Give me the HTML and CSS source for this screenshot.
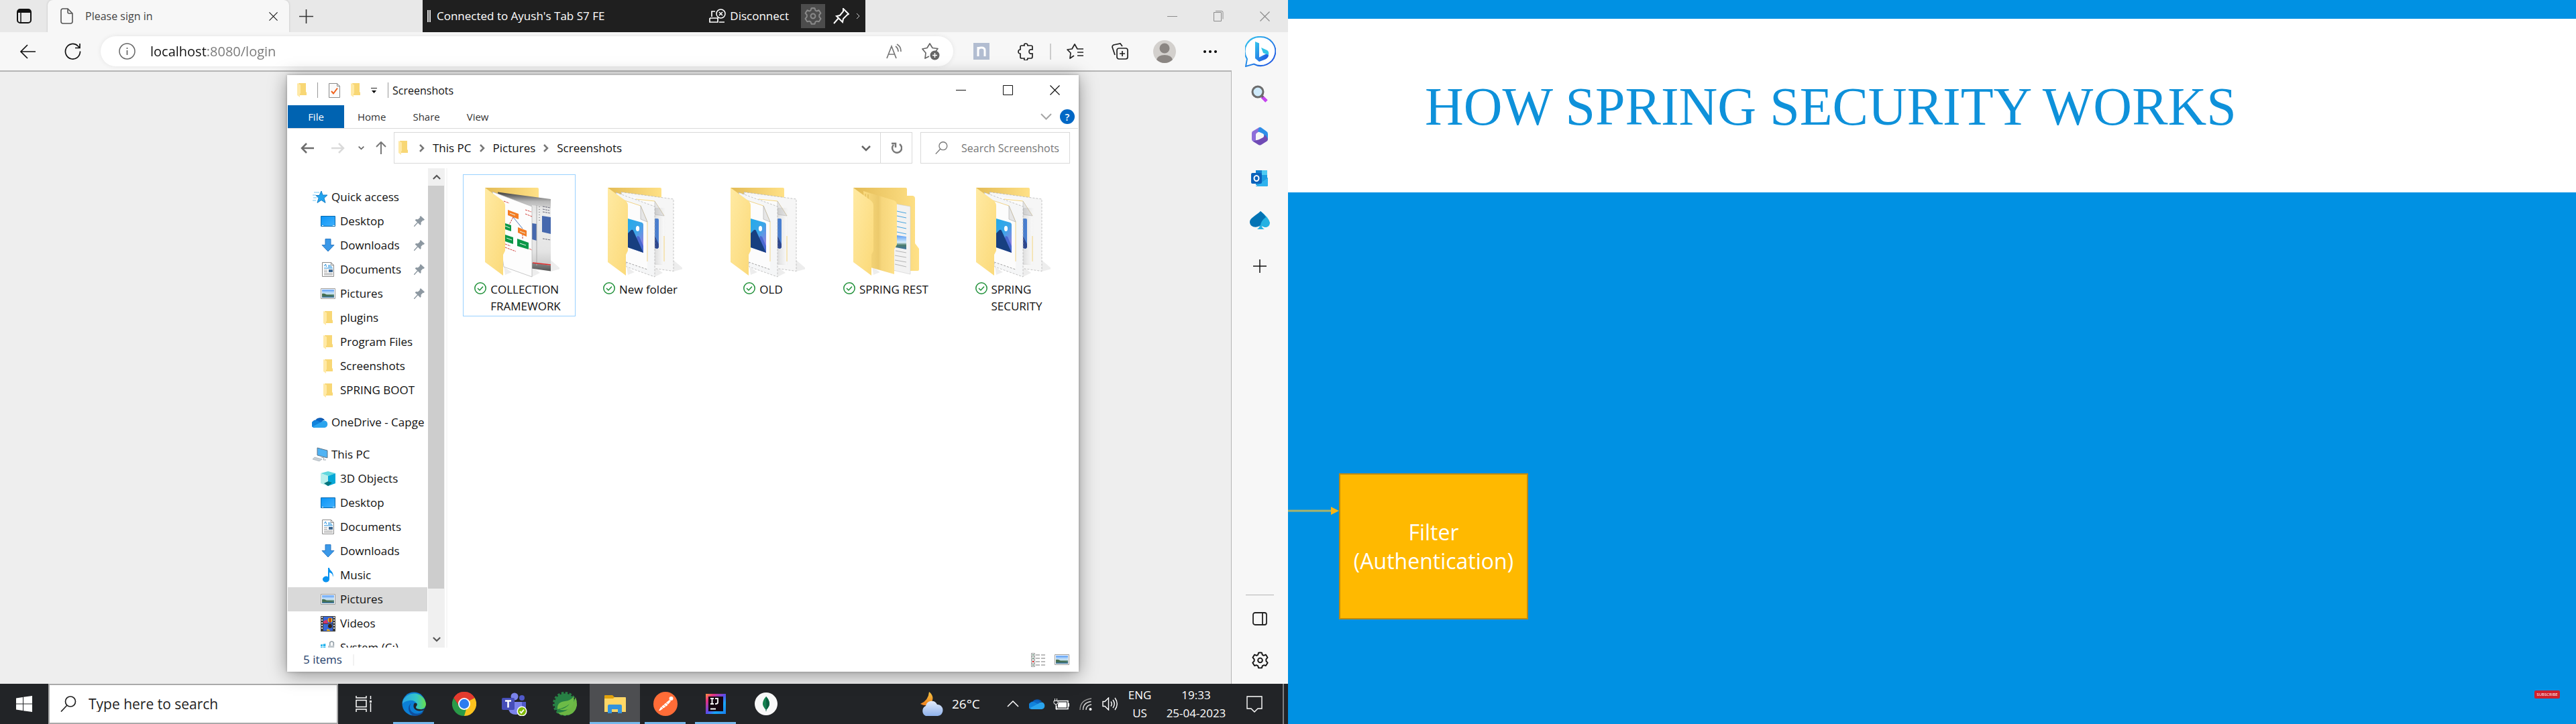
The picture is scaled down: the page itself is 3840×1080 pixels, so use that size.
FILE: index.html
```html
<!DOCTYPE html>
<html lang="en">
<head>
<meta charset="utf-8">
<meta name="viewport" content="width=device-width, initial-scale=1">
<title>Please sign in</title>
<link rel="stylesheet" href="styles.css">
</head>
<body>
<svg class="sprite" aria-hidden="true">
  <defs>
    <linearGradient id="gBack" x1="0" x2="1"><stop offset="0" stop-color="#e3bb55"/><stop offset="1" stop-color="#ffe187"/></linearGradient>
    <linearGradient id="gFlap" x1="0" x2="1" y1="0" y2="1"><stop offset="0" stop-color="#ffeaa3"/><stop offset="1" stop-color="#fbd978"/></linearGradient>
    <linearGradient id="gMid" x1="0" x2="1"><stop offset="0" stop-color="#fbdc80"/><stop offset=".45" stop-color="#ecca6c"/><stop offset=".55" stop-color="#f6d67c"/><stop offset="1" stop-color="#ffe28b"/></linearGradient>
    <linearGradient id="gSky" x1="0" y1="0" x2=".7" y2="1"><stop offset="0" stop-color="#22a9ea"/><stop offset=".5" stop-color="#3ba6e8"/><stop offset="1" stop-color="#9a7fe0"/></linearGradient>
    <linearGradient id="gDark" x1="0" y1="0" x2="0" y2="1"><stop offset="0" stop-color="#3c3c3c"/><stop offset=".12" stop-color="#b9b9b9"/><stop offset=".3" stop-color="#f0f0f0"/><stop offset=".75" stop-color="#d0d0d0"/><stop offset="1" stop-color="#555"/></linearGradient>
    <linearGradient id="gShade" x1="0" x2="1"><stop offset="0" stop-color="#777" stop-opacity=".5"/><stop offset="1" stop-color="#999" stop-opacity="0"/></linearGradient>
    <linearGradient id="gPic" x1="0" y1="0" x2="0" y2="1"><stop offset="0" stop-color="#5a9df5"/><stop offset=".5" stop-color="#d6ecfa"/><stop offset=".7" stop-color="#4b7d6b"/><stop offset="1" stop-color="#3d73a5"/></linearGradient>
    <linearGradient id="gEdgeA" x1="0" y1="0" x2="1" y2="0"><stop offset="0" stop-color="#2ba6e6"/><stop offset=".6" stop-color="#35c6c8"/><stop offset="1" stop-color="#68e04a"/></linearGradient>
    <linearGradient id="gBing" x1="0" y1="0" x2="1" y2="1"><stop offset="0" stop-color="#35c8ee"/><stop offset="1" stop-color="#1b4ae0"/></linearGradient>
    <linearGradient id="gDesk" x1="0" y1="0" x2="1" y2="1"><stop offset="0" stop-color="#0a95f7"/><stop offset="1" stop-color="#42b0fb"/></linearGradient>
    <linearGradient id="gIj" x1="0" y1="0" x2="1" y2="1"><stop offset="0" stop-color="#ff9a3d"/><stop offset=".2" stop-color="#e6317e"/><stop offset=".5" stop-color="#5a4bea"/><stop offset=".7" stop-color="#18a6f5"/><stop offset="1" stop-color="#1a7df0"/></linearGradient>
    <linearGradient id="gCloud" x1="0" y1="0" x2="0" y2="1"><stop offset="0" stop-color="#e4ecfb"/><stop offset="1" stop-color="#8fb2ec"/></linearGradient>
    <linearGradient id="gMoon" x1="0" y1="0" x2="0" y2="1"><stop offset="0" stop-color="#f6c544"/><stop offset="1" stop-color="#ee7f1c"/></linearGradient>
  </defs>
  <symbol id="folder" viewBox="0 0 14 21"><path d="M2 0h11v13l1 1v4H4z" fill="#f8d775"/><path d="M0 0l5 2.500v12.500l-1 1v5L0 18z" fill="#ffe9a6"/></symbol>
  <symbol id="picture" viewBox="0 0 22 16"><path d="M.5.500h21v15H.500z" fill="#fff" stroke="#9b9b9b"/><path d="M2 2h18v12H2z" fill="url(#gPic)"/><path d="M2 8q4-1 7 2 5 0 9 1v1H2z" fill="#466f53"/></symbol>
  <symbol id="desktop" viewBox="0 0 22 16"><path d="M.5.500h21v15H.500z" fill="url(#gDesk)" stroke="#0568ae"/><path d="M2 14.500h2m14 0h3" stroke="#fff"/></symbol>
  <symbol id="download" viewBox="0 0 22 22"><path d="M7 1.500h8v9h5l-9 9.500-9-9.500h5z" fill="#3a98e8" stroke="#2a79c4"/></symbol>
  <symbol id="document" viewBox="0 0 22 22"><path d="M2.500.500h13l4 4v17h-17z" fill="#fff" stroke="#8a8a8a"/><path d="M15.500.500v4h4" fill="none" stroke="#8a8a8a"/><path d="M5 6l2.500-3 1 4M11 5h4M11 7h6M5 9h13" stroke="#1f8bd8" fill="none"/><path d="M5 12h5m-5 2.500h5M5 17h13M5 19h13" stroke="#9b9b9b"/><path d="M12 11h6v4h-6z" fill="#3c668f"/></symbol>
  <symbol id="music" viewBox="0 0 22 22"><path d="M11 0h2c0 4 7 6 5.500 13H18c0-4-2-5-5-6v10a5 4.500 0 1 1-2-3.500z" fill="#0a93f0"/></symbol>
  <symbol id="video" viewBox="0 0 22 23"><path d="M0 0h22v23H0z" fill="#3d3d3d"/><path d="M4 1h14v10H4zM4 12h14v10H4z" fill="#3767d8"/><path d="M1 1h2v2H1zm0 4h2v2H1zm0 4h2v2H1zm0 4h2v2H1zm0 4h2v2H1zM19 1h2v2h-2zm0 4h2v2h-2zm0 4h2v2h-2zm0 4h2v2h-2zm0 4h2v2h-2z" fill="#ddd"/><circle cx="14" cy="6" r="3.500" fill="#e8a31b"/><path d="M4 8l5-3 2 6H4z" fill="#d1366b"/><path d="M13 3h2v7h-2z" fill="#a92513"/><circle cx="14" cy="15" r="3" fill="#32251a"/><path d="M10 19l4 2v1H9z" fill="#f0b624"/></symbol>
  <symbol id="cube" viewBox="0 0 22 22"><path d="M11 0l11 3-11 4L0 3z" fill="#62d7dd"/><path d="M0 3l11 4v15L0 18z" fill="#b9efec"/><path d="M22 3L11 7v15l11-4z" fill="#06a7d6"/><path d="M11 15l6 2-6 5-6-4z" fill="#04747d"/></symbol>
  <symbol id="pc" viewBox="0 0 24 22"><path d="M8 1l15 4v11L8 12z" fill="#4fb3f4" stroke="#5c7387"/><path d="M14 15l4 1-1 3h4" stroke="#9aa5ad" fill="none"/><path d="M4 15l11 3-4 3-10-3z" fill="#c9d1d7" stroke="#9aa5ad" stroke-width=".6"/></symbol>
  <symbol id="star" viewBox="0 0 24 20"><path d="M14 1l2 6 7 0-5 4.500 2 7-6-4-6 4 2-7-4-4h5z" fill="#22a4ee" stroke="#1780c9"/><path d="M3 3h8M1 7h5M2 11h5M1 15h5" stroke="#6ec3f3"/></symbol>
  <symbol id="cloud" viewBox="0 0 24 16"><path d="M5 6a7.500 6.500 0 0 1 14-1z" fill="#0a57b0"/><path d="M6 4.500a6.800 6 0 0 1 10.500 1L8 15H5A5 5 0 0 1 6 4.500z" fill="#0d66c2"/><path d="M3 6a6 6 0 0 1 7 .5L17 10l-8 6H5A5 5 0 0 1 3 6z" fill="#1183dc"/><path d="M18 5.500a5.300 5.300 0 0 1 1 10.500H5q-2 0-3.500-2L14 7.500q2-2 4-2z" fill="#2aa4ee"/></symbol>
  <symbol id="drive" viewBox="0 0 24 22"><path d="M0 6l3-.500v3.500H0zm4-.700l4-.600V9H4zM0 10h3v3H0zm4 0h4v4H4z" fill="#20b2ee"/><path d="M12 8h10v12H12z" fill="#bcc4ca"/><path d="M15 8V3q3-4 6 0v5" stroke="#9aa5ad" stroke-width="2" fill="none"/></symbol>
  <symbol id="pin" viewBox="0 0 16 16"><path d="M10 0l6 5.500-1.500 1.500-1-.300-3 3 .200 2.800L9.500 14 6 10.500 1 16H0v-1l5-5.500L1.700 6.500 3 5l3 .300L9 2.500l-.300-1z" fill="#8d98a1"/></symbol>
  <symbol id="synced" viewBox="0 0 18 18"><circle cx="9" cy="9" r="8.200" fill="#fff" stroke="#1f9038" stroke-width="1.500"/><path d="M5 9l3 3 5-5.500" fill="none" stroke="#1f9038" stroke-width="1.500"/></symbol>
  <symbol id="min" viewBox="0 0 15 15"><path d="M0 7.500h15" stroke="currentColor"/></symbol>
  <symbol id="max" viewBox="0 0 15 15"><path d="M.5.500h14v14H.500z" stroke="currentColor" fill="none"/></symbol>
  <symbol id="cross" viewBox="0 0 15 15"><path d="M.5.500l14 14m0-14l-14 14" stroke="currentColor" stroke-width="1.200"/></symbol>
  <symbol id="plus" viewBox="0 0 20 20"><path d="M10 0v20M0 10h20" stroke="currentColor" stroke-width="1.500"/></symbol>
  <symbol id="chev" viewBox="0 0 14 10"><path d="M1 2l6 6 6-6" stroke="currentColor" stroke-width="2.500" fill="none"/></symbol>
  <symbol id="lens" viewBox="0 0 24 24"><circle cx="15" cy="8.500" r="7.500" fill="none" stroke="currentColor" stroke-width="1.700"/><path d="M10 14L1 23.500" stroke="currentColor" stroke-width="1.700"/></symbol>
  <symbol id="gear" viewBox="0 0 24 24"><path d="M12 .900l2.300.300.900 3 1.900.900 2.900-1.200 2.600 4.100-2.100 2.400v2.600l2.200 2.500-2.600 4.200-3-.800-1.900 1.100-.900 2.900H9.700l-.900-2.900-1.900-1.100-3 .8-2.600-4.200 2.200-2.500v-2.600L1.400 8 4 3.900l2.900 1.200 1.900-.900.900-3z" fill="none" stroke="currentColor" stroke-width="1.800" stroke-linejoin="round"/><circle cx="12" cy="12" r="3.200" fill="none" stroke="currentColor" stroke-width="1.800"/></symbol>
  <symbol id="photoFolder" viewBox="-9 0 120 134">
    <path d="M0 0h78q2 0 2 2v70H20z" fill="url(#gBack)"/>
    <path d="M98 108l15 13-15 4zM70 118l12 9-12 6zM28 118l12 8-10 4z" fill="#000" opacity=".07"/>
    <path d="M20 6.500L98 17v107.500L30 115z" fill="#f6f6f6" stroke="#b5b5b5" stroke-dasharray="3 2" stroke-width=".8"/>
    <path d="M25 11l47 9 12 22v73l-30-6z" fill="#fbfbfb"/>
    <path d="M42 17l28 3 14 22M84 72v38" fill="none" stroke="#f6d67c"/><path d="M70 20l14 22-14-2z" fill="#e4e4e4" stroke="#bbb" stroke-width=".6"/>
    <path d="M70 46h4q2 0 2 2v41l-2 2-4-1z" fill="#3f7fe0"/><path d="M70 72l6 12v5l-2 2-4-1z" fill="#1d3c92"/>
    <path d="M70 30h16v85H70z" fill="url(#gShade)" opacity=".45"/>
    <path d="M12 7l58 21v105L28 118z" fill="#f5f6f7" stroke="#b5b5b5" stroke-dasharray="3 2" stroke-width=".8"/>
    <path d="M25 20l24 7 10 24v71l-32-10z" fill="#fcfcfc"/>
    <path d="M27 111l32 11" stroke="#888" stroke-width=".8" stroke-dasharray="3 2"/>
    <path d="M25 19l24 8 10 24v59" fill="none" stroke="#f1d58b"/><path d="M49 27l10 24-10-4z" fill="#e6e6e6" stroke="#aaa" stroke-width=".6"/>
    <path d="M30 46l21 6q2 1 2 3v42l-23-8z" fill="url(#gSky)"/><path d="M40 84l4-12 3 1 6 14v10z" fill="#4a69d2"/><path d="M30 68l5-5q2-1 3 1l15 33-23-8z" fill="#173f80"/><ellipse cx="44.500" cy="61" rx="2.600" ry="4" fill="#fff"/>
    <path d="M0 0l26 19q4 3 4 8v67l-3 6v31L0 111z" fill="url(#gFlap)"/>
  </symbol>
  <symbol id="chartFolder" viewBox="-9 0 120 134">
    <path d="M0 0h78q2 0 2 2v70H20z" fill="url(#gBack)"/>
    <path d="M98 108l15 13-15 4zM70 118l12 9-12 6zM28 118l12 8-10 4z" fill="#000" opacity=".07"/>
    <path d="M19 6.500L98 17v107.500L30 115z" fill="url(#gDark)"/>
    <path d="M70 26l28 4v86l-28-4z" fill="#ececec" opacity=".7"/>
    <path d="M85 42l13 2v25l-13-3zM70 53l7 1v25l-7-2z" fill="#4668ae"/><path d="M77 26v90" stroke="#aaa"/><path d="M81 28v24" stroke="#555" stroke-dasharray="1 3"/>
    <path d="M86 28l11 2m-11 2l10 2m-10 2l11 2M86 76l12 2" stroke="#667" stroke-dasharray="3 1" stroke-width="1"/>
    <path d="M71 112l27 3" stroke="#e22a2a" stroke-width="1.500"/>
    <path d="M11 6l59 22v105L28 118z" fill="#fdfdfd" stroke="#b0b0b0" stroke-width=".7"/>
    <path d="M42 44l-6 11M56 69v8" stroke="#c6413b" stroke-dasharray="3 1"/><path d="M42 44l14 17" stroke="#5077b5"/>
    <path d="M34 33l16 6v8l-16-6zM49 59l13 5v9l-13-6z" fill="#f37c24"/>
    <path d="M30 53l9 3v9l-9-3zM30 70l12 4v10l-12-4zM48 76l17 6v10l-17-5z" fill="#0b9747"/>
    <path d="M37 38l8 3M52 65l8 3M30 57l7 3M32 75l8 3M52 83l9 3" stroke="#e9f5e9"/>
    <path d="M28 20l8 3M60 33l9 3m-9 3l10 4M30 84l8 3m-8 2l16 6M66 91l4 2" stroke="#d2403a" stroke-dasharray="3 1"/>
    <path d="M0 0l26 19q4 3 4 8v67l-3 6v31L0 111z" fill="url(#gFlap)"/>
  </symbol>
  <symbol id="nestedFolder" viewBox="-9 0 120 134">
    <path d="M0 0h78q2 0 2 2v10h9q3 1 3 4v67l6 8v31q0 2-2 2H60L20 40z" fill="url(#gBack)"/>
    <path d="M28 118l12 8-10 4z" fill="#000" opacity=".07"/>
    <path d="M62 24l23 4v101l-26-6z" fill="#f2f2f2" stroke="#ccc" stroke-width=".6"/>
    <path d="M65 35l14 3m-14 4l14 3m-14 5l14 3m-14 5l14 3m-14 5l14 3" stroke="#48a4de" stroke-width="1"/><path d="M65 71l14 2v19l-16-3z" fill="url(#gPic)"/><path d="M63 94l16 3m-17 4l17 3m-17 4l17 3m-17 3l17 4" stroke="#b5b5b5"/>
    <path d="M15 5l46 14q4 2 4 7v59l-4 7v37L26 119z" fill="url(#gMid)"/>
    <path d="M18 9v10m4-9v12" stroke="#d9b452"/>
    <path d="M0 0l26 19q4 3 4 8v67l-3 6v31L0 111z" fill="url(#gFlap)"/>
  </symbol>
</svg>

<main class="screens">
  <section class="desktop" aria-label="Desktop">
    <div class="browser">
      <header class="tabstrip">
        <button class="ws" aria-label="Tab actions"><svg width="22" height="22" viewBox="0 0 22 22"><rect x="1" y="1" width="20" height="20" rx="4" fill="none" stroke="#111" stroke-width="2"/><path d="M1 6V4q0-3 3-3h14q3 0 3 3v2z" fill="#111"/><path d="M6 6v15" stroke="#111" stroke-width="1.500"/></svg></button>
        <div class="tab"><svg width="19" height="24" viewBox="0 0 19 24"><path d="M4 1h7l7 7v12q0 3-3 3H4q-3 0-3-3V4q0-3 3-3z" fill="none" stroke="#555" stroke-width="1.600"/><path d="M11 1v5q0 2 2 2h5" fill="none" stroke="#555" stroke-width="1.600"/></svg><span class="tab-title">Please sign in</span><button aria-label="Close tab"><svg width="13" height="13"><use href="#cross"/></svg></button></div>
        <button class="newtab" aria-label="New tab"><svg width="21" height="21"><use href="#plus"/></svg></button>
        <div class="winbtns dim"><button aria-label="Minimise"><svg width="15" height="15"><use href="#min"/></svg></button><button aria-label="Restore"><svg width="15" height="16" viewBox="0 0 15 16"><path d="M.5 2.500h11v13H.500zM3 .500h9q2 0 2 2v10" stroke="currentColor" fill="none"/></svg></button><button aria-label="Close"><svg width="15" height="15"><use href="#cross"/></svg></button></div>
      </header>
      <div class="toolbar">
        <button class="nav-btn" aria-label="Back"><svg width="25" height="22" viewBox="0 0 25 22"><path d="M12 1L2 11l10 10M2 11h22" fill="none" stroke="#111" stroke-width="1.700"/></svg></button>
        <button class="nav-btn" aria-label="Refresh"><svg width="25" height="25" viewBox="0 0 25 25"><path d="M23.500 12.500A11 11.300 0 1 1 20 4.500l3 3M23 1v6.500h-7" fill="none" stroke="#111" stroke-width="1.700"/></svg></button>
        <div class="omnibox">
          <svg width="25" height="25" viewBox="0 0 25 25"><circle cx="12.500" cy="12.500" r="11.500" fill="none" stroke="#666" stroke-width="1.500"/><path d="M12.500 11v7M12.500 7v2" stroke="#666" stroke-width="1.700"/></svg>
          <input class="url" aria-label="Address" value="localhost:8080/login">
          <button aria-label="Read aloud"><svg width="24" height="24" viewBox="0 0 24 24"><path d="M1 22L8 4l7 18M3.500 16h9M14 4q4 3 4 8M16 1q6 3 6 11" fill="none" stroke="#777" stroke-width="1.700"/></svg></button>
          <button aria-label="Add to favourites"><svg width="27" height="26" viewBox="0 0 27 26"><path d="M11 20l-6 3 1-8-5-6 7-1.500L12 1l4 6.500 8 1-3 4" fill="none" stroke="#666" stroke-width="1.700" stroke-linejoin="round"/><circle cx="19.500" cy="18.500" r="7" fill="#666"/><path d="M19.500 15v7M16 18.500h7" stroke="#fff" stroke-width="1.500"/></svg></button>
        </div>
        <div class="actions">
          <button aria-label="Notes extension"><svg width="24" height="25" viewBox="0 0 24 25"><path d="M0 0h24v25H0z" fill="#b2bdd1"/><path d="M7 20V6m0 5q0-4 5-4t5 4v9" fill="none" stroke="#fff" stroke-width="3"/></svg></button>
          <button aria-label="Extensions"><svg width="24" height="26" viewBox="0 0 24 26"><path d="M6 4h4q-1-3 2-3t3 3h5q2 0 2 2v4q-5-1-5 3t5 3v4q0 3-2 3h-5q0 3-3 3t-2-3H6q-2 0-2-2v-5q-3 0-3-3t3-3V6q0-2 2-2z" fill="none" stroke="#222" stroke-width="1.700"/></svg></button>
          <i class="divider"></i>
          <button aria-label="Favourites"><svg width="26" height="24" viewBox="0 0 26 24"><path d="M11 18l-6 4 1-8-5-5 7-1 4-7 4 7h9M16 13h9M16 18h9" fill="none" stroke="#222" stroke-width="1.700" stroke-linejoin="round"/></svg></button>
          <button aria-label="Collections"><svg width="25" height="25" viewBox="0 0 25 25"><path d="M5 18L1 6q0-2 2-3l10-2 3 4" fill="none" stroke="#222" stroke-width="1.700"/><rect x="8" y="8" width="16" height="16" rx="3" fill="none" stroke="#222" stroke-width="1.700"/><path d="M16 12v8M12 16h8" stroke="#222" stroke-width="1.700"/></svg></button>
          <button class="wide" aria-label="Profile"><svg width="34" height="34" viewBox="0 0 34 34"><circle cx="17" cy="17" r="17" fill="#d3d0cd"/><circle cx="17" cy="12" r="7.500" fill="#8b8683"/><path d="M5 29q2-7 12-7t12 7q-5 5-12 5T5 29z" fill="#8b8683"/></svg></button>
          <button class="wide" aria-label="Settings and more"><svg width="20" height="4" viewBox="0 0 20 4"><circle cx="2" cy="2" r="2"/><circle cx="10" cy="2" r="2"/><circle cx="18" cy="2" r="2"/></svg></button>
          <button class="bing" aria-label="Bing chat"><svg width="46" height="46" viewBox="0 0 46 46"><path d="M23 1a22 21.500 0 1 1-10 40.500L1 45l2-11A21.500 21.500 0 0 1 23 1z" fill="#fff" stroke="url(#gBing)" stroke-width="2"/><path d="M15 8l6 2.500v21L34 25l1 4q-1 4-6 6l-8 3-6-5z" fill="url(#gBing)"/><path d="M24 17l9 4q3 2 2 7l-8-3z" fill="#31c4e8"/></svg></button>
        </div>
      </div>
      <div class="viewport">
        <div class="page"></div>
        <aside class="side">
          <button aria-label="Search"><svg width="26" height="26" viewBox="0 0 26 26"><path d="M16 17l7 7" stroke="#c544f0" stroke-width="5"/><path d="M15 15l3 3" stroke="#666" stroke-width="3"/><circle cx="10" cy="10" r="8" fill="#cfeafa" stroke="#6c6c6c" stroke-width="3"/></svg></button>
          <button aria-label="Microsoft 365"><svg width="26" height="28" viewBox="0 0 26 28"><path d="M12 1L2 7Q1 8 1 10v9q0 2 2 3l4 2V12q0-2 2-3l7-4V3z" fill="#8d6fd9"/><path d="M12 1q2-1 4 1l7 5q2 1 2 4v9l-6-3v-5q0-1-2-2l-7-3z" fill="#2d8fe8"/><path d="M25 18q0 3-2 4l-8 5q-2 1-4 0l-8-5 5-2q2 0 4-1l6-3 3-4z" fill="#704bb5"/></svg></button>
          <button aria-label="Outlook"><svg width="26" height="26" viewBox="0 0 26 26"><path d="M7 1h17v22H7z" fill="#1b9de2"/><path d="M7 1h9v7H7z" fill="#1380cf"/><path d="M16 1h8v7h-8z" fill="#4ecbf3"/><path d="M25 12v11q0 2-2 2H7z" fill="#1266b5"/><path d="M7 25l18-13v11q0 2-2 2z" fill="#2fb2ee"/><rect y="5" width="16" height="16" rx="2" fill="#0b62bb"/><ellipse cx="8" cy="13" rx="3.500" ry="4" fill="none" stroke="#fff" stroke-width="2"/></svg></button>
          <button aria-label="Games"><svg width="30" height="28" viewBox="0 0 30 28"><path d="M16 0q12 9 14 17c0 7-7 9-12 5q0 3 4 5H11q3-2 4-5z" fill="#25b1e2"/><path d="M16 0q6 5 8 9-7 5-8 12C10 26 0 24 0 16 0 10 9 7 16 0z" fill="#0273b4"/></svg></button>
          <button class="add" aria-label="Customise"><svg width="20" height="20"><use href="#plus"/></svg></button>
          <div class="side-foot">
            <button aria-label="Hide sidebar"><svg width="22" height="20" viewBox="0 0 22 20"><rect x="1" y="1" width="20" height="18" rx="3" fill="none" stroke="#222" stroke-width="1.800"/><path d="M15 1v18" stroke="#222" stroke-width="1.800"/></svg></button>
            <button aria-label="Settings"><svg width="25" height="26"><use href="#gear"/></svg></button>
          </div>
        </aside>
      </div>
    </div>

    <div class="castbar">
      <i class="grip"></i><span class="cast-text">Connected to Ayush's Tab S7 FE</span>
      <button class="disconnect"><svg width="25" height="22" viewBox="0 0 25 22"><path d="M9 4H4v8M1 14v6h12v-6H1M15 20h8" fill="none" stroke="#fff" stroke-width="1.700"/><circle cx="17.500" cy="7.500" r="6.500" fill="none" stroke="#fff" stroke-width="1.500"/><path d="M15 5l5 5m0-5l-5 5" stroke="#fff" stroke-width="1.500"/></svg>Disconnect</button>
      <button class="castgear" aria-label="Settings"><svg width="26" height="26"><use href="#gear"/></svg></button>
      <button class="castpin" aria-label="Pin"><svg width="24" height="24" viewBox="0 0 24 24"><path d="M15 1l8 8-2 1-6 6-1 5-9-9 5-1 5-6zM8 15l-7 8" fill="none" stroke="#fff" stroke-width="2"/></svg></button>
      <button aria-label="Hide"><svg width="7" height="10" viewBox="0 0 7 10"><path d="M1 1l4 4-4 4" fill="none" stroke="#ccc"/></svg></button>
    </div>

    <section class="explorer" aria-label="Screenshots">
      <header class="ex-title">
        <svg width="14" height="21"><use href="#folder"/></svg><i class="sep"></i>
        <svg width="17" height="22" viewBox="0 0 17 22"><path d="M.5.500h12l4 4v17H.500z" fill="#fafafa" stroke="#8a8a8a"/><path d="M12.500.500v4h4" fill="none" stroke="#8a8a8a"/><path d="M4 12l3 3.500 6-8" fill="none" stroke="#f0611b" stroke-width="2"/></svg>
        <svg width="14" height="21"><use href="#folder"/></svg>
        <svg width="9" height="8" viewBox="0 0 9 8"><path d="M0 .500h9" stroke="#222"/><path d="M1 4h7L4.500 8z"/></svg><i class="sep"></i>
        <h2>Screenshots</h2>
        <div class="winbtns"><button aria-label="Minimise"><svg width="15" height="15"><use href="#min"/></svg></button><button aria-label="Maximise"><svg width="15" height="15"><use href="#max"/></svg></button><button aria-label="Close"><svg width="15" height="15"><use href="#cross"/></svg></button></div>
      </header>
      <nav class="ribbon"><button class="file">File</button><button>Home</button><button>Share</button><button>View</button>
        <div class="ribbon-end"><button aria-label="Expand ribbon"><svg width="17" height="10" viewBox="0 0 17 10"><path d="M1 1l7.500 7.500L16 1" fill="none" stroke="#a5a5a5" stroke-width="2"/></svg></button><button class="help" aria-label="Help">?</button></div>
      </nav>
      <div class="ex-nav">
        <button class="arrow" aria-label="Back"><svg width="20" height="16" viewBox="0 0 20 16"><path d="M9 1L2 8l7 7M2 8h18" fill="none" stroke="#6d6d6d" stroke-width="2.500"/></svg></button>
        <button class="arrow" aria-label="Forward"><svg width="20" height="16" viewBox="0 0 20 16"><path d="M11 1l7 7-7 7M18 8H0" fill="none" stroke="#dadada" stroke-width="2.500"/></svg></button>
        <button class="recent" aria-label="Recent"><svg width="9" height="7"><use href="#chev"/></svg></button>
        <button class="up" aria-label="Up"><svg width="16" height="19" viewBox="0 0 16 19"><path d="M1 8l7-7 7 7M8 1v18" fill="none" stroke="#777" stroke-width="2"/></svg></button>
        <div class="crumbs"><svg class="place" width="14" height="21"><use href="#folder"/></svg><svg class="gt" viewBox="0 0 8 12"><path d="M1 1l5 5-5 5" /></svg><a href="#pc">This PC</a><svg class="gt" viewBox="0 0 8 12"><path d="M1 1l5 5-5 5"/></svg><a href="#pictures">Pictures</a><svg class="gt" viewBox="0 0 8 12"><path d="M1 1l5 5-5 5"/></svg><a href="#screenshots">Screenshots</a>
          <button class="drop" aria-label="Previous locations"><svg width="14" height="10"><use href="#chev"/></svg></button><button class="reload" aria-label="Refresh"><svg width="17" height="17" viewBox="0 0 17 17"><path d="M4 4a7 7 0 1 0 9-1M1 2h6v6" fill="none" stroke="#777" stroke-width="2.500"/></svg></button></div>
        <label class="find"><svg width="19" height="19"><use href="#lens"/></svg><input type="text" aria-label="Search Screenshots" placeholder="Search Screenshots"></label>
      </div>
      <div class="ex-body">
        <nav class="tree">
          <a class="group" href="#q"><svg width="24" height="20"><use href="#star"/></svg>Quick access</a>
          <a href="#q1"><svg width="22" height="16"><use href="#desktop"/></svg>Desktop<svg class="pin"><use href="#pin"/></svg></a>
          <a href="#q2"><svg width="22" height="22"><use href="#download"/></svg>Downloads<svg class="pin"><use href="#pin"/></svg></a>
          <a href="#q3"><svg width="22" height="22"><use href="#document"/></svg>Documents<svg class="pin"><use href="#pin"/></svg></a>
          <a href="#q4"><svg width="22" height="16"><use href="#picture"/></svg>Pictures<svg class="pin"><use href="#pin"/></svg></a>
          <a href="#q5"><svg width="22" height="21"><use href="#folder"/></svg>plugins</a>
          <a href="#q6"><svg width="22" height="21"><use href="#folder"/></svg>Program Files</a>
          <a href="#q7"><svg width="22" height="21"><use href="#folder"/></svg>Screenshots</a>
          <a href="#q8"><svg width="22" height="21"><use href="#folder"/></svg>SPRING BOOT</a>
          <a class="group later" href="#o"><svg width="24" height="16"><use href="#cloud"/></svg>OneDrive - Capge</a>
          <a class="group later" href="#p"><svg width="24" height="22"><use href="#pc"/></svg>This PC</a>
          <a href="#p1"><svg width="22" height="22"><use href="#cube"/></svg>3D Objects</a>
          <a href="#p2"><svg width="22" height="16"><use href="#desktop"/></svg>Desktop</a>
          <a href="#p3"><svg width="22" height="22"><use href="#document"/></svg>Documents</a>
          <a href="#p4"><svg width="22" height="22"><use href="#download"/></svg>Downloads</a>
          <a href="#p5"><svg width="22" height="22"><use href="#music"/></svg>Music</a>
          <a class="current" href="#p6"><svg width="22" height="16"><use href="#picture"/></svg>Pictures</a>
          <a href="#p7"><svg width="22" height="23"><use href="#video"/></svg>Videos</a>
          <a href="#p8"><svg width="22" height="22"><use href="#drive"/></svg>System (C:)</a>
        </nav>
        <div class="scroll"><button class="flip" aria-label="Scroll up"><svg width="12" height="9"><use href="#chev"/></svg></button><i class="thumb"></i><i class="track"></i><button aria-label="Scroll down"><svg width="12" height="9"><use href="#chev"/></svg></button></div>
        <div class="files">
          <a class="tile focus" href="#f1"><svg width="120" height="134"><use href="#chartFolder"/></svg><span class="name"><svg width="18" height="18"><use href="#synced"/></svg><span>COLLECTION<br>FRAMEWORK</span></span></a>
          <a class="tile" href="#f2"><svg width="120" height="134"><use href="#photoFolder"/></svg><span class="name"><svg width="18" height="18"><use href="#synced"/></svg><span>New folder</span></span></a>
          <a class="tile" href="#f3"><svg width="120" height="134"><use href="#photoFolder"/></svg><span class="name"><svg width="18" height="18"><use href="#synced"/></svg><span>OLD</span></span></a>
          <a class="tile" href="#f4"><svg width="120" height="134"><use href="#nestedFolder"/></svg><span class="name"><svg width="18" height="18"><use href="#synced"/></svg><span>SPRING REST</span></span></a>
          <a class="tile" href="#f5"><svg width="120" height="134"><use href="#photoFolder"/></svg><span class="name"><svg width="18" height="18"><use href="#synced"/></svg><span>SPRING<br>SECURITY</span></span></a>
        </div>
      </div>
      <footer class="status"><span>5 items</span><i></i>
        <button aria-label="Details view"><svg width="22" height="21" viewBox="0 0 22 21"><path d="M.5.500h5v20h-5zM.500 5.500h5m-5 5h5m-5 5h5" fill="none" stroke="#9b9b9b"/><path d="M7 3h6m2 0h6M7 8h6m2 0h6M7 13h6m2 0h6M7 18h6m2 0h6" stroke="#777"/><path d="M2 3h2m-2 5h2m-2 10h2" stroke="#55806a" stroke-width="2"/><path d="M2 13h2" stroke="#c00" stroke-width="2"/></svg></button>
        <button aria-label="Large icons view"><svg width="22" height="16"><use href="#picture"/></svg></button></footer>
    </section>

    <footer class="taskbar">
      <button class="start" aria-label="Start"><svg width="24" height="24" viewBox="0 0 24 24"><path d="M0 3.500L10 2v9.500H0zM11 1.800L24 0v11.500H11zM0 12.500h10V22L0 20.500zM11 12.500h13V24l-13-1.800z" fill="#fff"/></svg></button>
      <label class="tb-search"><svg width="24" height="24"><use href="#lens"/></svg><input type="text" aria-label="Search" placeholder="Type here to search"></label>
      <div class="apps">
        <button aria-label="Task view"><svg width="24" height="24" viewBox="0 0 24 24"><path d="M1 0v3h15V0M1 24v-4h15v4M1 6.500h15v10H1zM22.500 0v5M22.500 11v13" fill="none" stroke="#fff" stroke-width="1.500"/><path d="M21 7h3v3h-3z" fill="#fff"/></svg></button>
        <button class="run" aria-label="Edge"><svg width="36" height="36" viewBox="0 0 36 36"><circle cx="18" cy="18" r="17.500" fill="#0c7fd6"/><path d="M1 15A18 18 0 0 1 36 18c0 6-5 8-9 8s-6-1-6-3 3-3 1-6-6-5-11-4-8 2-10 5z" fill="url(#gEdgeA)"/><path d="M14 17c-6 8 2 18 12 15q5-1 7-4-3 8-15 8C10 33 7 22 14 17z" fill="#0f4f9f"/><path d="M22 17c2 3-1 4-1 6q0 3 6 3 5 1 8-2l-2 3c-9 4-18-1-15-9q1-2 4-1z" fill="#222427"/></svg></button>
        <button aria-label="Chrome"><svg width="36" height="36" viewBox="0 0 36 36"><path d="M2.400 9A18 18 0 0 1 33.600 9L18 18z" fill="#e33b2e"/><path d="M33.600 9A18 18 0 0 1 18 36l-1-10 9-13z" fill="#fcc31e"/><path d="M18 36A18 18 0 0 1 2.400 9L11 22l10 4z" fill="#2a9a48"/><path d="M18 9h15.600A18 18 0 0 0 18 0A18 18 0 0 0 2.400 9L11 22z" fill="#e33b2e"/><circle cx="18" cy="18" r="9" fill="#fff"/><circle cx="18" cy="18" r="7.200" fill="#2e7cf0"/></svg></button>
        <button aria-label="Teams"><svg width="38" height="36" viewBox="0 0 38 36"><circle cx="19" cy="7" r="5.500" fill="#7b83eb"/><circle cx="30" cy="9" r="4" fill="#5059c9"/><path d="M24 15h12v10q0 5-6 5h-6z" fill="#5059c9"/><path d="M10 15h20v11q0 8-9 8T10 26z" fill="#7b83eb"/><rect y="9" width="19" height="18" rx="2" fill="#464eb8"/><path d="M5 13.500h9M9.500 13.500v10" stroke="#fff" stroke-width="2.500"/><circle cx="30" cy="29" r="7.500" fill="#fff"/><circle cx="30" cy="29" r="6" fill="#7fb900"/><path d="M27 29l2 2.500 4-5" fill="none" stroke="#fff" stroke-width="2"/></svg></button>
        <button aria-label="Spring Tools"><svg width="36" height="36" viewBox="0 0 36 36"><circle cx="18" cy="18" r="15.500" fill="#278044"/><circle cx="18" cy="18" r="16.500" fill="none" stroke="#278044" stroke-width="3" stroke-dasharray="3.500 2.500"/><path d="M34 8q2 5 2 12-3 15-18 15-6 0-11-4Q27 31 34 8z" fill="#6cb644"/><path d="M7 26q-1-11 11-12 9-1 13-7 3 18-12 20-6 1-9-1 10-1 15-8-7 6-18 8z" fill="#6cbb47"/></svg></button>
        <button class="run active" aria-label="File Explorer"><svg width="32" height="27" viewBox="0 0 32 27"><path d="M0 1q0-1 1-1h11l3 3v3H0z" fill="#e0a10b"/><path d="M0 5h13l2-2h16q1 0 1 1v21H0z" fill="#ffd766"/><path d="M5 27V16q0-2 2-2h17q2 0 2 2v11h-6v-6h-9v6z" fill="#3293dd"/></svg></button>
        <button class="run" aria-label="Postman"><svg width="36" height="36" viewBox="0 0 36 36"><circle cx="18" cy="18" r="18" fill="#ff6c37"/><circle cx="26.500" cy="10" r="3" fill="#fff"/><path d="M24 12l2 2-6 7-10 7-2 0 3-5 8-7z" fill="#fff"/><path d="M12 22l3 3m0-6l4 3m-1-6l4 3" stroke="#ff6c37" stroke-width=".8"/></svg></button>
        <button class="run" aria-label="IntelliJ IDEA"><svg width="30" height="30" viewBox="0 0 30 30"><path d="M0 0h30v30H0z" fill="url(#gIj)"/><path d="M4 4h22v22H4z" fill="#150611"/><path d="M7 7h5M9.500 7v8M7 15h5M14 7h4v6q0 2-4 2M7 22.500h8" fill="none" stroke="#fff" stroke-width="1.800"/></svg></button>
        <button aria-label="MongoDB Compass"><svg width="34" height="34" viewBox="0 0 34 34"><circle cx="17" cy="17" r="17" fill="#f8f8f8"/><path d="M17 6q10 11 0 20-10-9 0-20z" fill="#14824f"/><path d="M17 6q10 11 0 20z" fill="#0a6040"/><path d="M17 15v13" stroke="#1a7350"/></svg></button>
      </div>
      <div class="tray">
        <button class="weather"><svg width="36" height="36" viewBox="0 0 36 36"><path d="M14 0q9 7 3 17-7 6-16 1Q13 13 14 0z" fill="url(#gMoon)"/><path d="M9 36a9 8.500 0 0 1 0-15 9 9 0 0 1 17-2 8 8.500 0 0 1 1 17z" fill="url(#gCloud)"/></svg>26°C</button>
        <button aria-label="Hidden icons"><svg width="18" height="10" viewBox="0 0 18 10"><path d="M1 9l8-8 8 8" fill="none" stroke="#fff" stroke-width="1.500"/></svg></button>
        <button aria-label="OneDrive"><svg width="24" height="16"><use href="#cloud"/></svg></button>
        <button aria-label="Battery"><svg width="24" height="17" viewBox="0 0 24 17"><path d="M7 3.500h15v12H5v-5M23.500 7v5" fill="none" stroke="#fff" stroke-width="1.500"/><path d="M8 5.500h12v8H7V9z" fill="#fff"/><path d="M1 3.500h6v3q0 2-3 2t-3-2zM2.500 0v3M5.500 0v3M4 9v7h2" fill="none" stroke="#fff"/></svg></button>
        <button aria-label="Wi-Fi"><svg width="19" height="19" viewBox="0 0 19 19"><circle cx="16.500" cy="17" r="2" fill="#fff"/><path d="M10 18q0-7 8-8M5.500 18q0-11 12-12.500" fill="none" stroke="#ddd" stroke-width="1.300"/><path d="M1 18Q1 3 18 1" fill="none" stroke="#999" stroke-width="1.300"/></svg></button>
        <button aria-label="Volume"><svg width="23" height="20" viewBox="0 0 23 20"><path d="M1 6.500h3L9.500 1v18L4 13.500H1zM13 6.500q2.500 3.500 0 7M16 4q4.500 6 0 12M19 1q6.500 9 0 18" fill="none" stroke="#fff" stroke-width="1.400"/></svg></button>
        <button class="lang">ENG<br>US</button>
        <button class="clock">19:33<br>25-04-2023</button>
        <button class="note" aria-label="Notifications"><svg width="24" height="25" viewBox="0 0 24 25"><path d="M1 1h22v18h-6l-5 5-5-5H1z" fill="none" stroke="#fff" stroke-width="1.400"/></svg></button>
        <i class="peek"></i>
      </div>
    </footer>
  </section>

  <section class="slide" aria-label="Presentation">
    <header><h1>HOW SPRING SECURITY WORKS</h1></header>
    <svg class="link" width="76" height="12" viewBox="0 0 76 12"><path d="M0 6h66" stroke="#a9b36c" stroke-width="3"/><path d="M64 0l12 6-12 6z" fill="#f7b516"/></svg>
    <div class="node">Filter<br>(Authentication)</div>
    <button class="subscribe">SUBSCRIBE</button>
  </section>
</main>
</body>
</html>
```

FILE: styles.css
```css
* { box-sizing: border-box; }
body { margin: 0; font: 17px/24px "Open Sans", "Noto Sans", sans-serif; color: #111; }
button, input { font: inherit; color: inherit; border: 0; padding: 0; margin: 0; background: none; }
button { display: flex; align-items: center; justify-content: center; flex: none; white-space: nowrap; }
input { outline: 0; min-width: 0; }
a { color: inherit; text-decoration: none; }
svg { display: block; flex: none; }
h1, h2 { margin: 0; font-weight: 400; }
.sprite { position: absolute; width: 0; height: 0; }

.screens { display: grid; grid-template-columns: 1fr 1fr; min-height: 100vh; }
.desktop { position: relative; display: flex; flex-direction: column; min-width: 0; overflow: hidden; background: #eee; }

/* Browser */
.browser { flex: 1; display: flex; flex-direction: column; }
.tabstrip { display: flex; height: 48px; background: #e8e8e8; }
.ws { width: 71px; }
.tab { display: flex; align-items: center; width: 360px; padding: 0 17px 0 19px; background: #f7f7f7; border-radius: 8px 8px 0 0; box-shadow: 0 0 3px #bbb; clip-path: inset(0 -4px 0 -4px); }
.tab-title { flex: 1; margin-left: 18px; font-size: 16px; color: #444; }
.newtab { width: 50px; color: #333; }
.winbtns { display: flex; margin-left: auto; align-self: stretch; }
.winbtns button { width: 70px; }
.winbtns.dim button { width: 69px; color: #8b8b8b; }
.toolbar { display: flex; align-items: center; height: 57px; padding-left: 8px; background: #f7f7f7; }
.nav-btn { width: 67px; }
.omnibox { flex: 1; display: flex; align-items: center; height: 45px; margin: 0 9px 0 8px; padding: 0 20px 0 27px; gap: 22px; border-radius: 24px; background: #fff; box-shadow: 0 0 6px #e4e4e4; }
.omnibox button + button { margin-left: 7px; }
.url { flex: 1; font-size: 20px; color: transparent; background: linear-gradient(to right, #111 85px, #777 85px); -webkit-background-clip: text; background-clip: text; }
.actions { display: flex; align-items: center; }
.actions button { width: 66px; }
.actions .wide { width: 68px; }
.actions .bing { width: 82px; }
.divider { width: 2px; height: 24px; margin: 0 3px; background: #ccc; }
.viewport { flex: 1; display: flex; }
.page { flex: 1; border-top: 2px solid #b5b5b5; border-right: 1px solid #b5b5b5; background: #eee; }
.side { display: flex; flex-direction: column; width: 84px; padding: 3px 0 4px; background: #f7f7f7; }
.side button { width: 100%; height: 63px; }
.side .add { height: 74px; }
.side-foot { display: flex; flex-direction: column; align-items: center; margin-top: auto; }
.side-foot::before { content: ""; width: 42px; height: 1px; margin-bottom: 4px; background: #b5b5b5; }
.side-foot button { height: 62px; }

/* Wireless display bar that floats over the tab strip */
.castbar { position: absolute; top: 0; left: 630px; display: flex; align-items: center; width: 660px; height: 48px; padding: 0 7px; background: #1f1f1f; color: #fff; }
.grip { width: 5px; height: 18px; margin-right: 9px; border: solid #ddd; border-width: 0 2px; }
.cast-text { flex: 1; }
.disconnect { gap: 6px; margin-right: 18px; }
.castgear { width: 36px; height: 36px; margin-right: 12px; background: #4c4c4c; color: #8a8a8a; }
.castpin { margin-right: 10px; }

/* File Explorer window */
.explorer { position: absolute; inset: 112px 312px 78px 428px; display: flex; flex-direction: column; padding: 0 1px; background: #fff; box-shadow: 0 4px 26px rgba(0, 0, 0, .4), 0 0 4px rgba(0, 0, 0, .25); }
.ex-title { display: flex; align-items: center; gap: 16px; height: 45px; padding-left: 14px; }
.ex-title h2 { margin-left: -10px; font-size: 16px; }
.sep { width: 1px; height: 23px; background: #999; }
.ribbon { display: flex; height: 35px; border-bottom: 1px solid #dadada; font-size: 15px; color: #333; }
.ribbon > button { padding: 0 20px; }
.ribbon > .file { width: 84px; background: #0063b1; color: #fff; }
.ribbon-end { display: flex; align-items: center; gap: 12px; margin-left: auto; padding-right: 5px; }
.help { width: 22px; height: 22px; border-radius: 50%; background: #0067c5; color: #fff; font-weight: 600; }
.ex-nav { display: flex; padding: 5px 12px 7px 6px; }
.arrow { width: 46px; }
.recent { width: 22px; color: #666; }
.up { width: 38px; }
.crumbs { flex: 1; display: flex; align-items: center; gap: 12px; height: 47px; padding-left: 6px; border: 1px solid #d9d9d9; }
.place { margin-right: 5px; }
.gt { width: 8px; height: 12px; fill: none; stroke: #777; stroke-width: 2.5; }
.drop { margin: 0 2px 0 auto; color: #666; }
.reload { width: 47px; height: 100%; border-left: 1px solid #d9d9d9; }
.find { display: flex; align-items: center; gap: 20px; width: 223px; margin-left: 12px; padding-left: 21px; border: 1px solid #d9d9d9; color: #777; }
.find input { flex: 1; font-size: 16px; }
input::placeholder { color: inherit; opacity: 1; }
.ex-body { flex: 1; display: flex; min-height: 0; }
.tree { width: 208px; padding-top: 25px; overflow: hidden; }
.tree a { display: flex; align-items: center; gap: 7px; height: 36px; padding-left: 49px; white-space: nowrap; }
.tree .group { gap: 5px; padding-left: 36px; }
.tree .later { margin-top: 12px; }
.tree .current { background: #d9d9d9; }
.pin { width: 16px; height: 16px; margin: 0 4px 0 auto; }
.scroll { display: flex; flex-direction: column; width: 25px; margin-left: 1px; color: #555; background: #f0f0f0; }
.scroll button { height: 26px; }
.flip svg { transform: rotate(180deg); }
.thumb { flex: 601; margin-right: 1px; background: #cdcdcd; }
.track { flex: 62; }
.files { flex: 1; display: grid; grid-template-columns: repeat(auto-fill, 168px); align-content: start; gap: 15px; margin-left: 2px; padding: 9px 0 0 23px; border-left: 2px solid #f7f7f7; }
.tile { display: flex; flex-direction: column; align-items: center; height: 212px; padding-top: 19px; border: 1px solid transparent; line-height: 25px; }
.tile.focus { border-color: #99d1ff; }
.name { display: flex; gap: 6px; margin: 5px 5px 0 0; }
.name svg { margin-top: 2px; }
.status { display: flex; align-items: center; gap: 13px; height: 36px; padding: 0 13px 0 23px; color: #1f3e6b; }
.status i { width: 2px; height: 17px; margin: 0 auto 0 3px; background: #f2f2f2; }

/* Taskbar */
.taskbar { display: flex; height: 60px; background: #222427; color: #fff; }
.start { width: 72px; }
.tb-search { display: flex; align-items: center; gap: 18px; width: 432px; padding-left: 16px; border: 2px solid #a9a9a9; background: #fff; color: #222; }
.tb-search input { flex: 1; font-size: 21px; }
.apps { display: flex; }
.apps button { position: relative; width: 75px; }
.run::after { content: ""; position: absolute; inset: auto 7px 0; height: 3px; background: #76b9ed; }
.apps .active { background: #4d4e51; }
.active::after { inset: auto 0 0; }
.tray { display: flex; margin-left: auto; }
.tray button { width: 36px; }
.tray .weather { justify-content: flex-start; gap: 12px; width: 121px; font-size: 19px; }
.tray .lang { width: 54px; line-height: 27px; }
.tray .clock { width: 114px; line-height: 27px; }
.tray .note { width: 60px; }
.peek { width: 8px; margin-left: 12px; border-left: 2px solid #7d7f82; }

/* Slide */
.slide { position: relative; min-width: 0; overflow: hidden; padding-top: 28px; background: #0091e3; }
.slide header { display: flex; align-items: center; height: 259px; padding: 3px 0 0 204px; background: #fff; }
.slide h1 { font: 80px/92px "Liberation Serif", serif; color: #0e91da; white-space: nowrap; }
.link { position: absolute; left: 0; top: 756px; }
.node { position: absolute; left: 76px; top: 706px; display: flex; align-items: center; justify-content: center; width: 282px; height: 218px; border: 2px solid #bd8a12; background: #ffb900; color: #fff; font-size: 32px; line-height: 43px; text-align: center; }
.subscribe { position: absolute; right: 24px; bottom: 38px; width: 38px; height: 12px; border-radius: 2px; background: #d0202c; color: #fff; font-size: 6px; line-height: 8px; }
```
